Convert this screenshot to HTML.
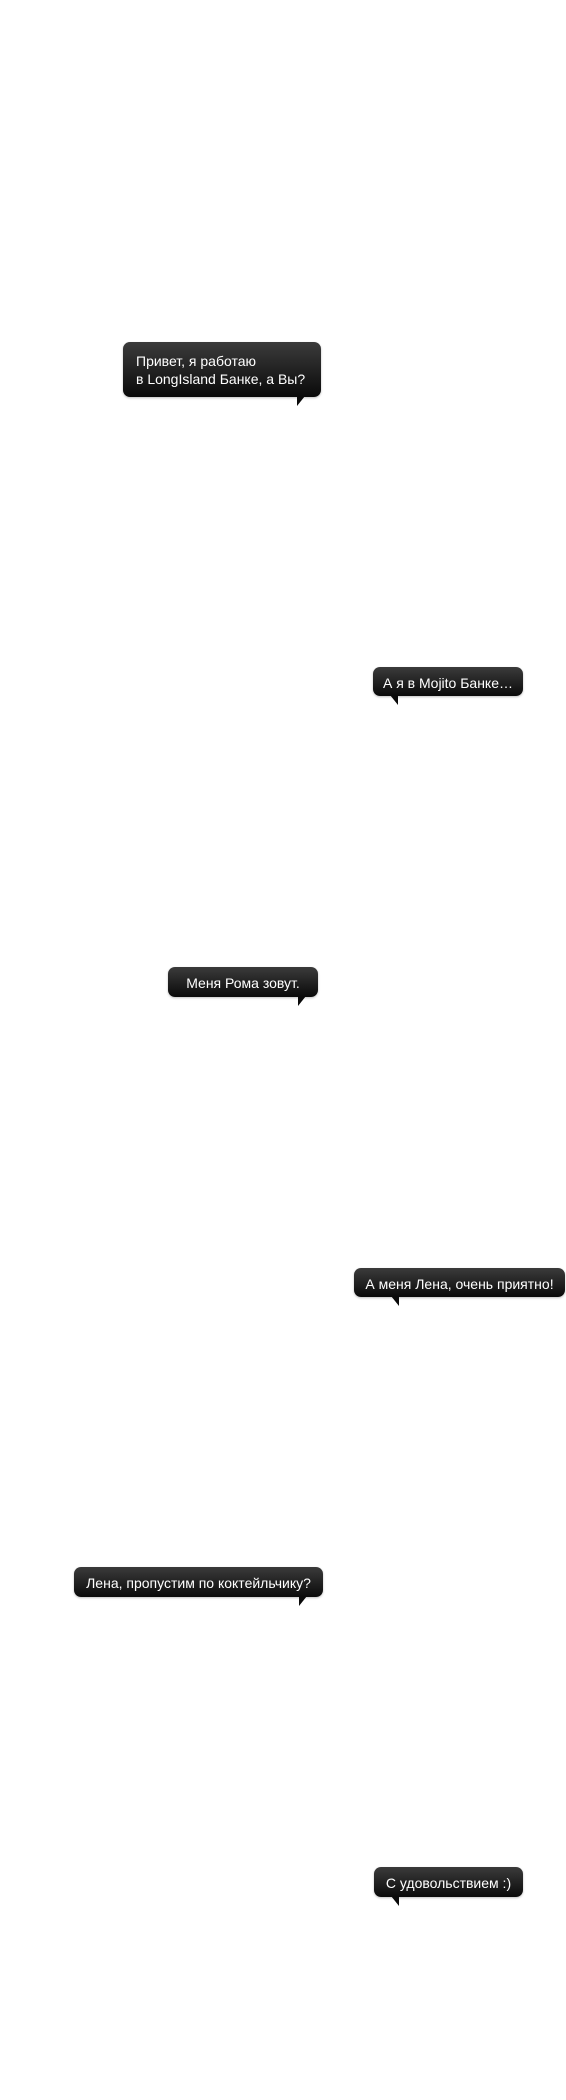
<!DOCTYPE html>
<html><head><meta charset="utf-8"><style>
html,body{margin:0;padding:0;background:#fff;width:566px;height:2100px;overflow:hidden}
.b{position:absolute;box-sizing:border-box;background:linear-gradient(#3b3b3b,#0a0a0a);border-radius:7px;color:#fff;font:14px/18px "Liberation Sans",Arial,sans-serif;text-align:center;white-space:nowrap;padding:7px 0 5px;box-shadow:0 1px 2px rgba(0,0,0,.25)}
.t{position:absolute;width:0;height:0;border-style:solid}
.tl{bottom:-9px;border-width:0 8px 10px 0;border-color:transparent #0a0a0a transparent transparent}
.tr{bottom:-9px;border-width:0 0 10px 8px;border-color:transparent transparent transparent #0a0a0a}
</style></head><body>
<div class="b" style="left:123px;top:342px;width:198px;height:55px;text-align:left;padding:10px 0 0 13px">Привет, я работаю<br>в LongIsland Банке, а Вы?<div class="t tr" style="left:174px"></div></div>
<div class="b" style="left:373px;top:667px;width:150px;height:29px">А я в Mojito Банке…<div class="t tl" style="left:17px"></div></div>
<div class="b" style="left:168px;top:967px;width:150px;height:30px">Меня Рома зовут.<div class="t tr" style="left:130px"></div></div>
<div class="b" style="left:354px;top:1268px;width:211px;height:29px">А меня Лена, очень приятно!<div class="t tl" style="left:37px"></div></div>
<div class="b" style="left:74px;top:1567px;width:249px;height:30px">Лена, пропустим по коктейльчику?<div class="t tr" style="left:225px"></div></div>
<div class="b" style="left:374px;top:1867px;width:149px;height:30px">С удовольствием :)<div class="t tl" style="left:17px"></div></div>
</body></html>
